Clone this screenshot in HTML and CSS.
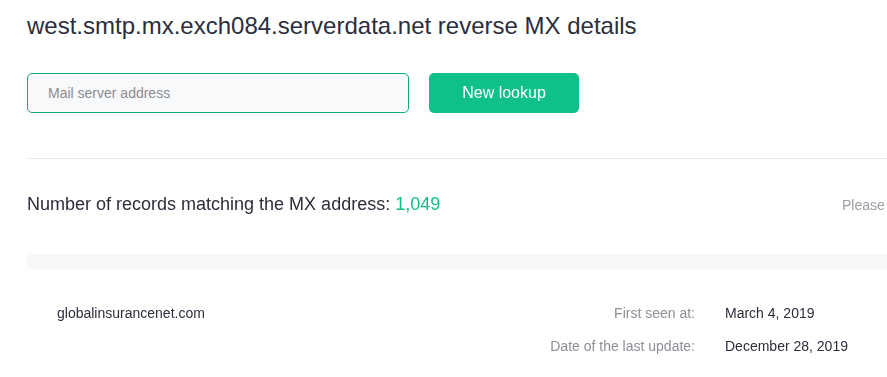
FILE: index.html
```html
<!DOCTYPE html>
<html lang="en">
<head>
    <meta charset="UTF-8">
    <title>Reverse MX details</title>
    <link rel="stylesheet" href="styles.css">
</head>
<body>
    <div class="page">
        <h1 class="page-title">west.smtp.mx.exch084.serverdata.net reverse MX details</h1>

        <form class="lookup" onsubmit="return false">
            <input type="text" class="lookup-input" placeholder="Mail server address" autofocus>
            <button type="submit" class="lookup-btn">New lookup</button>
        </form>

        <div class="divider"></div>

        <div class="summary">
            <div class="summary-count">Number of records matching the MX address: <span class="count">1,049</span></div>
            <div class="summary-note">Please sign in to see the full list of records</div>
        </div>

        <div class="table-head"></div>

        <div class="record">
            <div class="record-domain">globalinsurancenet.com</div>
            <div class="record-label">First seen at:</div>
            <div class="record-value">March 4, 2019</div>

            <div></div>
            <div class="record-label">Date of the last update:</div>
            <div class="record-value">December 28, 2019</div>
        </div>
    </div>
</body>
</html>
```

FILE: styles.css
```css
body {
    margin: 0;
    font-family: "Liberation Sans", Arial, sans-serif;
    color: #2c2e3d;
    background-color: #fff;
    overflow: hidden;
}

.page {
    width: 1100px;
    padding: 12px 0 0 27px;
}

.page-title {
    margin: 0;
    font-size: 24px;
    font-weight: normal;
    line-height: 28px;
}

.lookup {
    display: flex;
    gap: 20px;
    margin-top: 33px;
}

.lookup-input {
    width: 382px;
    height: 40px;
    box-sizing: border-box;
    padding: 0 20px;

    background-color: #f8f9fb;
    border: 1px solid #14a97c;
    border-radius: 5px;

    font-family: inherit;
    font-size: 14px;
    color: #2c2e3d;
    outline: none;
    caret-color: #2c2e3d;
}

.lookup-input::placeholder {
    color: #8a8c94;
}

.lookup-btn {
    width: 150px;
    height: 40px;

    background-color: #10c08a;
    border: none;
    border-radius: 5px;

    font-family: inherit;
    font-size: 16px;
    color: #fff;
    cursor: pointer;
}

.divider {
    height: 1px;
    margin-top: 45px;
    background-color: #e6e7ea;
}

.summary {
    display: grid;
    grid-template-columns: 815px auto;
    align-items: baseline;
    margin-top: 33px;
}

.summary-count {
    font-size: 18px;
    line-height: 24px;
}

.count {
    color: #10c08a;
}

.summary-note {
    font-size: 14px;
    color: #9a9ca3;
    white-space: nowrap;
}

.table-head {
    height: 15px;
    margin-top: 38px;
    background-color: #f6f7f9;
    border-radius: 5px;
}

.record {
    display: grid;
    grid-template-columns: 438px 170px auto;
    column-gap: 30px;
    row-gap: 13px;
    padding: 34px 0 0 30px;

    font-size: 14px;
    line-height: 20px;
}

.record-label {
    text-align: right;
    color: #8d8f96;
}
```
